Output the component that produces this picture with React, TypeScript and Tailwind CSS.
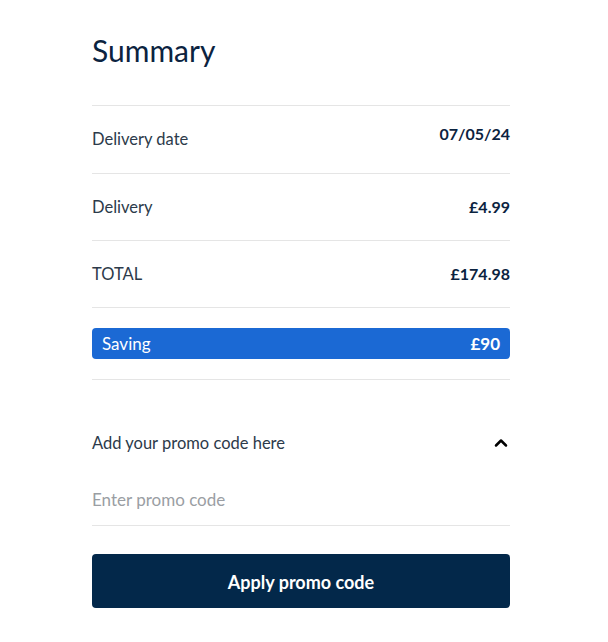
import { ChevronUp } from "lucide-react"

function Row({ label, value, className = "", h = "h-[67px]" }: { label: string; value: string; className?: string; h?: string }) {
  return (
    <div className={"flex items-center justify-between border-b border-[#e5e5e5] " + h}>
      <span className="text-[16.5px] text-[#2c3a4a]">{label}</span>
      <span className={"text-[16px] font-bold text-[#0b2340] " + className}>{value}</span>
    </div>
  )
}

export default function App() {
  return (
    <div className="min-h-[642px] bg-white font-['Lato',sans-serif]">
      <div className="ml-[92px] w-[418px] pt-[30px]">
        <h1 className="text-[30px] leading-[40px] text-[#0b2340]">Summary</h1>

        <div className="mt-[35px] border-t border-[#e5e5e5]">
          <Row label="Delivery date" value="07/05/24" className="mb-[11px]" h="h-[68px] pb-[1px]" />
          <Row label="Delivery" value="£4.99" />
          <Row label="TOTAL" value="£174.98" />
          <div className="border-b border-[#e5e5e5] pb-[20px] pt-[20px]">
            <div className="flex h-[31px] items-center justify-between rounded-[4px] bg-[#1b69d4] px-[10px] text-[17px] text-white">
              <span>Saving</span>
              <span className="font-bold">£90</span>
            </div>
          </div>
        </div>

        <div className="mt-[51px] flex items-center justify-between">
          <span className="text-[16.5px] text-[#2c3a4a]">Add your promo code here</span>
          <ChevronUp size={20} strokeWidth={3} className="mr-[-1px] text-black" />
        </div>

        <input
          placeholder="Enter promo code"
          className="mt-[33px] block h-[37px] w-full border-b border-[#e5e5e5] pb-[14px] text-[17px] text-[#2c3a4a] outline-none placeholder:text-[#9a9ea3]"
        />

        <button className="mt-[28px] flex h-[54px] w-full items-center justify-center rounded-[4px] bg-[#03284a] pt-[3px] text-[18px] font-bold text-white">
          Apply promo code
        </button>
      </div>
    </div>
  )
}
